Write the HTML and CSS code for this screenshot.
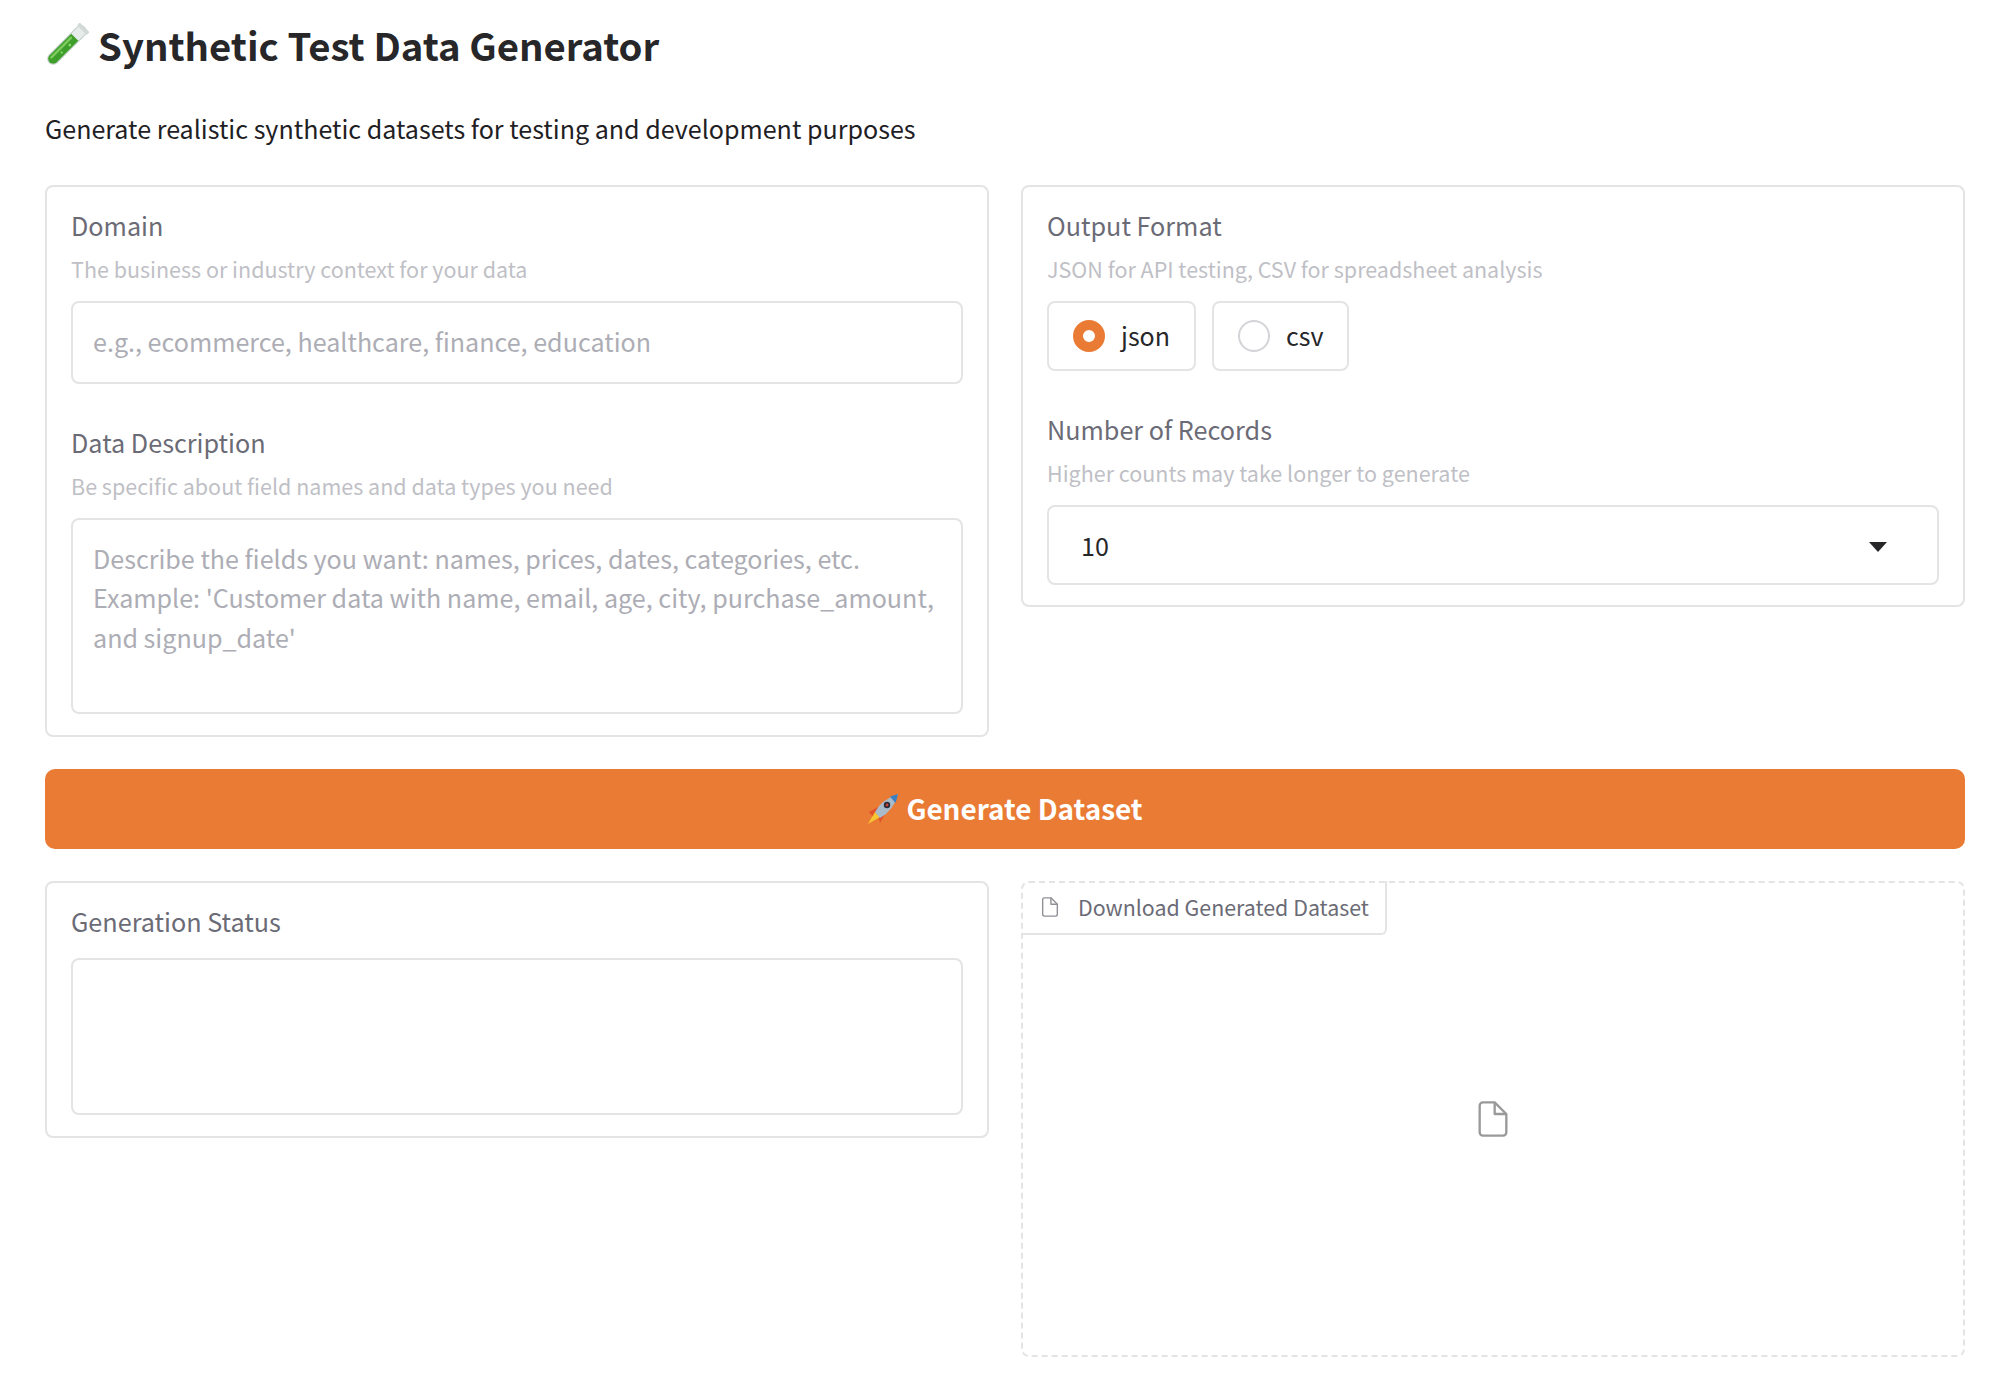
FILE: index.html
```html
<!DOCTYPE html>
<html lang="en">
<head>
  <meta charset="UTF-8">
  <title>Synthetic Test Data Generator</title>
  <link rel="stylesheet" href="styles.css">
</head>

<body>
<div class="app">
  <h1 class="title">
    <svg class="tube" viewBox="0 0 44 44" width="44" height="44">
      <g transform="rotate(45 22 22)">
        <rect x="16.500" y="-3" width="11" height="50" rx="5.500" fill="#e6ecea" stroke="#c3cdca" stroke-width="1"/>
        <path d="M17 11 H27 V41.500 a5 5 0 0 1 -10 0 Z" fill="#3f9f2b"/>
        <rect x="18.500" y="13" width="2.500" height="30" rx="1.200" fill="#7ccb5c"/>
        <circle cx="24" cy="20" r="1.300" fill="#8fdc6e"/>
        <circle cx="23.500" cy="31" r="1.100" fill="#8fdc6e"/>
        <rect x="15" y="-3" width="14" height="4" rx="1.500" fill="#d2dad8"/>
      </g>
    </svg>
    Synthetic Test Data Generator
  </h1>
  <p class="subtitle">Generate realistic synthetic datasets for testing and development purposes</p>

  <div class="row top-row">
    <div class="panel">
      <label class="label">Domain</label>
      <div class="hint">The business or industry context for your data</div>
      <div class="input domain-input">e.g., ecommerce, healthcare, finance, education</div>
      <label class="label second">Data Description</label>
      <div class="hint">Be specific about field names and data types you need</div>
      <div class="input desc-input">Describe the fields you want: names, prices, dates, categories, etc.<br>Example: 'Customer data with name, email, age, city, purchase_amount,<br>and signup_date'</div>
    </div>
    <div class="panel">
      <label class="label">Output Format</label>
      <div class="hint">JSON for API testing, CSV for spreadsheet analysis</div>
      <div class="radios">
        <div class="radio"><span class="dot checked"></span><span class="radio-text">json</span></div>
        <div class="radio"><span class="dot"></span><span class="radio-text">csv</span></div>
      </div>
      <label class="label second">Number of Records</label>
      <div class="hint">Higher counts may take longer to generate</div>
      <div class="input select">
        <span>10</span>
        <span class="caret"></span>
      </div>
    </div>
  </div>

  <button class="generate">
    <svg class="rocket" viewBox="0 0 32 32" width="32" height="32">
      <path d="M2 19 L11 14 L18 21 L13 30 L11.500 24 L7 25 Z" fill="#e2502c"/>
      <path d="M1 31 L8 19 L13 24 Z" fill="#f7c531"/>
      <path d="M8 19 Q14 7 31 1 Q27 17 13 25 Z" fill="#a9bac9"/>
      <path d="M23 3.500 Q27 2 31 1 Q30 6 28.500 10 Z" fill="#3d7fc1"/>
      <circle cx="20" cy="12" r="3.200" fill="#2b2b36"/>
      <circle cx="20" cy="12" r="1.400" fill="#c9423a"/>
    </svg>
    <span class="generate-text">Generate Dataset</span>
  </button>

  <div class="row bottom-row">
    <div class="panel status-panel">
      <label class="label">Generation Status</label>
      <div class="input status-box"></div>
    </div>
    <div class="file-panel">
      <div class="file-tab">
        <svg class="file-icon" viewBox="0 0 24 24" width="22" height="22">
          <path d="M13 2H6a2 2 0 0 0-2 2v16a2 2 0 0 0 2 2h12a2 2 0 0 0 2-2V9z"/>
          <path d="M13 2v7h7"/>
        </svg>
        <span class="file-name">Download Generated Dataset</span>
      </div>
      <svg class="file-big" viewBox="0 0 24 24" width="40" height="40">
        <path d="M13 2H6a2 2 0 0 0-2 2v16a2 2 0 0 0 2 2h12a2 2 0 0 0 2-2V9z"/>
        <path d="M13 2v7h7"/>
      </svg>
    </div>
  </div>
</div>
</body>
</html>
```

FILE: styles.css
```css
* {
  box-sizing: border-box;
  padding: 0;
  margin: 0;
}

body {
  background: #fff;
  color: #27272a;
  font-family: "Noto Sans CJK SC", "Noto Sans", sans-serif;
}

.app {
  padding: 0 25px 0 45px;
}

.title {
  display: flex;
  align-items: center;
  gap: 9px;
  height: 90px;
  padding-bottom: 1px;
  font-size: 38.300px;
  font-weight: 600;
}

.subtitle {
  margin-top: 23px;
  height: 72px;
  font-size: 25.070px;
  line-height: 30px;
  color: #1f2024;
}

.row {
  display: grid;
  grid-template-columns: 1fr 1fr;
  gap: 32px;
  align-items: start;
}

.panel {
  border: 2px solid #e4e4e7;
  border-radius: 8px;
  padding: 20px 24px;
}

.top-row .panel:first-child {
  height: 552px;
}

.label {
  display: block;
  height: 38px;
  font-size: 25.200px;
  line-height: 36px;
  color: #6b6b76;
}

.label.second {
  margin-top: 40px;
}

.hint {
  margin-top: 7px;
  font-size: 21.500px;
  line-height: 34px;
  color: #bfbfc6;
}

.input {
  margin-top: 15px;
  border: 2px solid #e4e4e7;
  border-radius: 8px;
  padding: 0 20px;
  font-size: 25.100px;
  color: #adadb5;
}

.domain-input {
  height: 83px;
  line-height: 77px;
}

.desc-input {
  height: 196px;
  padding-top: 19px;
  line-height: 39.300px;
  white-space: nowrap;
}

.radios {
  display: flex;
  gap: 16px;
  margin-top: 15px;
}

.radio {
  display: flex;
  align-items: center;
  gap: 16px;
  height: 70px;
  padding: 0 24px;
  border: 2px solid #e4e4e7;
  border-radius: 8px;
  font-size: 25px;
  color: #27272a;
}

.radio-text {
  margin-bottom: 2px;
}

.dot {
  width: 32px;
  height: 32px;
  border: 2px solid #d4d4d8;
  border-radius: 50%;
}

.dot.checked {
  border: 10px solid #ea7b34;
  background: #fff;
}

.select {
  display: flex;
  align-items: center;
  justify-content: space-between;
  height: 80px;
  padding: 0 50px 0 32px;
  color: #27272a;
}

.caret {
  width: 0;
  height: 0;
  margin-top: 3px;
  border-left: 9px solid transparent;
  border-right: 9px solid transparent;
  border-top: 10px solid #27272a;
}

.generate {
  display: flex;
  align-items: center;
  justify-content: center;
  gap: 7px;
  width: 100%;
  height: 80px;
  margin: 32px 0;
  border: 0;
  border-radius: 10px;
  background: #ea7b34;
  color: #fff;
  font-family: inherit;
  font-size: 27.900px;
  font-weight: 600;
}

.generate-text {
  margin-bottom: 2px;
}

.status-panel {
  height: 257px;
}

.status-box {
  height: 157px;
  margin-top: 17px;
}

.file-panel {
  position: relative;
  display: flex;
  align-items: center;
  justify-content: center;
  height: 476px;
  border: 2px dashed #e4e4e7;
  border-radius: 8px;
}

.file-tab {
  position: absolute;
  left: -2px;
  top: -2px;
  display: flex;
  align-items: center;
  gap: 17px;
  width: 366px;
  height: 54px;
  padding-left: 18px;
  border: 2px solid #e4e4e7;
  border-top: 0;
  border-left: 0;
  border-radius: 0 0 6px 0;
  font-size: 21.400px;
  white-space: nowrap;
  color: #6b6b76;
}

.file-name {
  margin-bottom: 2px;
}

.file-icon {
  fill: none;
  stroke: #8f8f96;
  stroke-width: 1.500;
  stroke-linejoin: round;
}

.file-big {
  fill: none;
  stroke: #999;
  stroke-width: 1.400;
  stroke-linejoin: round;
}
```
